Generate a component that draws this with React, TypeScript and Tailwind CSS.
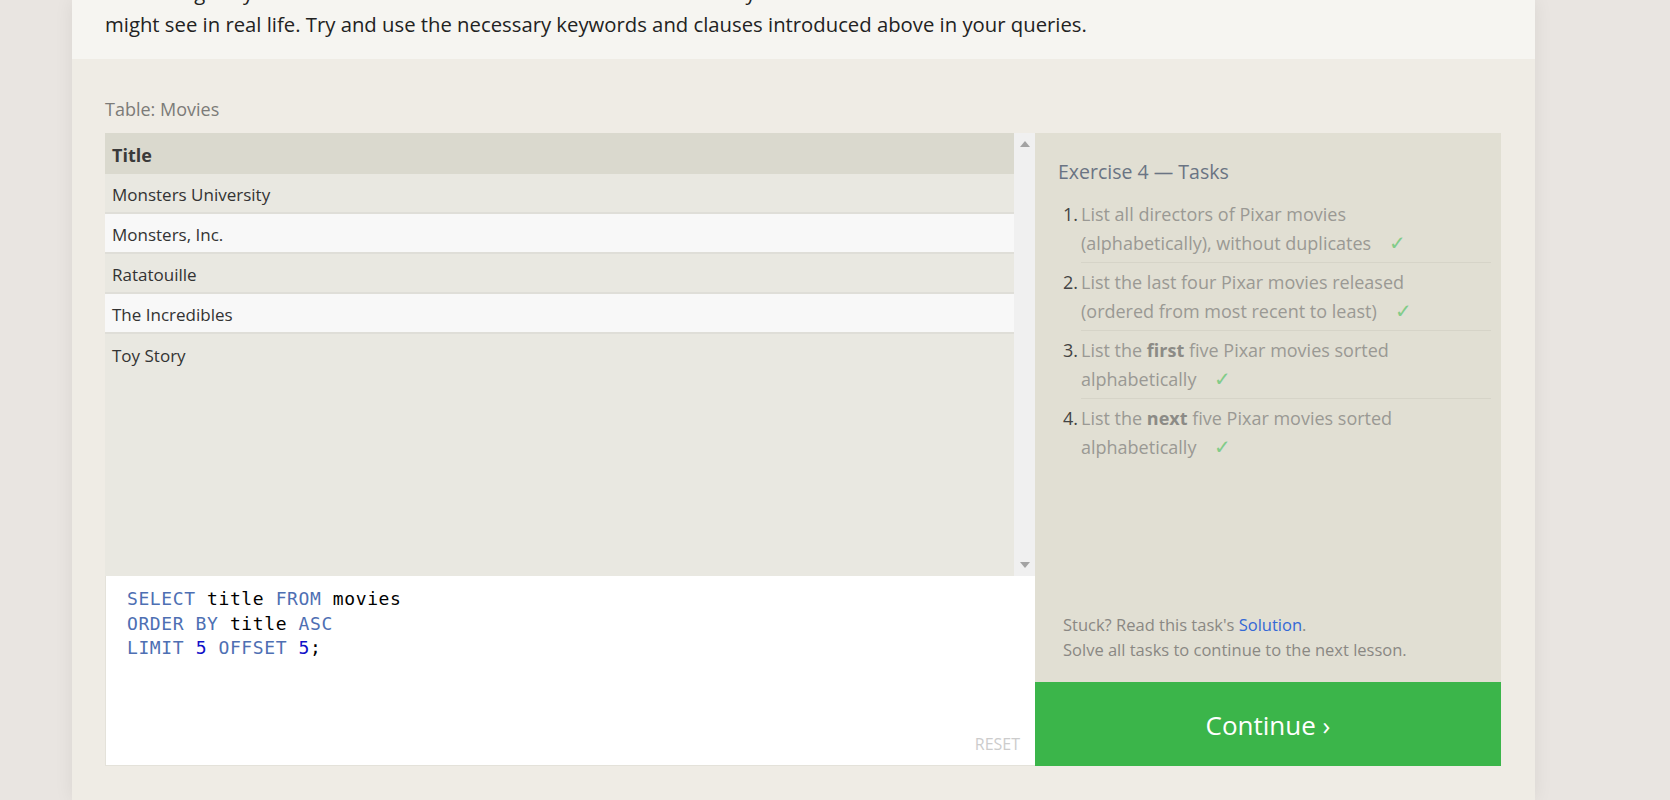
import React from 'react';

const movies = [
  'Monsters University',
  'Monsters, Inc.',
  'Ratatouille',
  'The Incredibles',
  'Toy Story'
];

type Task = { first: React.ReactNode; second: string };

const tasks: Task[] = [
  { first: 'List all directors of Pixar movies', second: '(alphabetically), without duplicates' },
  { first: 'List the last four Pixar movies released', second: '(ordered from most recent to least)' },
  {
    first: (
      <>
        List the <b className="font-bold text-[#8c8b86]">first</b> five Pixar movies sorted
      </>
    ),
    second: 'alphabetically'
  },
  {
    first: (
      <>
        List the <b className="font-bold text-[#8c8b86]">next</b> five Pixar movies sorted
      </>
    ),
    second: 'alphabetically'
  }
];

const Kw = ({ children }: { children: React.ReactNode }) => (
  <span className="text-[#4e6fb3]">{children}</span>
);
const Num = ({ children }: { children: React.ReactNode }) => (
  <span className="text-[#1010c8]">{children}</span>
);

const ResultTable = () => (
  <div className="flex h-[443px] bg-[#e9e8e1]">
    <div className="flex-1">
      <div className="h-[41px] bg-[#dad9ce] px-[7px] pt-[3px] flex items-center text-[18px] font-bold text-[#3a3a3a]">
        Title
      </div>
      {movies.map((m, i) => (
        <div
          key={m}
          className={
            'h-[40px] px-[7px] pt-[3px] flex items-center text-[17px] text-[#333] ' +
            (i < movies.length - 1 ? 'border-b-2 border-[#dfded8] ' : '') +
            (i % 2 === 1 ? 'bg-[#f8f8f8]' : 'bg-[#e9e8e1]')
          }
        >
          {m}
        </div>
      ))}
    </div>
    <div className="w-[21px] bg-[#f0f0f0] flex flex-col justify-between items-center py-[8px]">
      <svg width="10" height="6" viewBox="0 0 10 6">
        <path d="M5 0 L10 6 L0 6 Z" fill="#a3a3a3" />
      </svg>
      <svg width="10" height="6" viewBox="0 0 10 6">
        <path d="M0 0 L10 0 L5 6 Z" fill="#a3a3a3" />
      </svg>
    </div>
  </div>
);

const Editor = () => (
  <div className="relative h-[190px] bg-white border-b border-l border-[#e4e2da] pt-[11px] pl-[21px] font-['DejaVu_Sans_Mono',monospace] text-[18px] leading-[24.5px] text-black tracking-[0.6px]">
    <div>
      <Kw>SELECT</Kw> title <Kw>FROM</Kw> movies
    </div>
    <div>
      <Kw>ORDER BY</Kw> title <Kw>ASC</Kw>
    </div>
    <div>
      <Kw>LIMIT</Kw> <Num>5</Num> <Kw>OFFSET</Kw> <Num>5</Num>;
    </div>
    <span className="absolute right-[15px] bottom-[9px] font-['Open_Sans',sans-serif] tracking-normal text-[16px] text-[#cccccc]">
      RESET
    </span>
  </div>
);

const TaskPanel = () => (
  <div className="w-[466px] flex flex-col">
    <div className="flex-1 bg-[#e1dfd3] flex flex-col pl-[23px] pr-[10px]">
      <h3 className="mt-[26px] text-[19.5px] text-[#6a7483] leading-[26px]">Exercise 4 — Tasks</h3>
      <ol className="mt-[10px] pl-[5px]">
        {tasks.map((t, i) => (
          <li key={i} className="flex">
            <span className="w-[18px] shrink-0 text-[18px] leading-[29px] text-[#444] pt-[5px]">{i + 1}.</span>
            <div
              className={
                'flex-1 pt-[5px] pb-[4px] text-[18px] leading-[29px] text-[#9a9994] ' +
                (i < tasks.length - 1 ? 'border-b border-[#d6d4c8]' : '')
              }
            >
              <div>{t.first}</div>
              <div>
                {t.second}
                <span className="ml-[18px] text-[20px] leading-[20px] text-[#82cc89]">✓</span>
              </div>
            </div>
          </li>
        ))}
      </ol>
      <div className="mt-auto mb-[20px] pl-[5px] text-[16.5px] leading-[25px] text-[#8a8883]">
        <p>
          Stuck? Read this task's <span className="text-[#3468d6]">Solution</span>.
        </p>
        <p>Solve all tasks to continue to the next lesson.</p>
      </div>
    </div>
    <button className="h-[84px] pt-[3px] bg-[#3bb54a] text-white text-[26px] flex items-center justify-center">
      Continue ›
    </button>
  </div>
);

export default function App() {
  return (
    <div className="min-h-screen h-[800px] overflow-hidden bg-[#e9e5e1] font-['Open_Sans',sans-serif]">
      <div className="ml-[72px] w-[1463px] h-full bg-[#efece5] shadow-[0_0_18px_rgba(0,0,0,0.07)]">
        <div className="h-[59px] bg-[#f6f5f1] px-[33px] overflow-hidden">
          <div className="-mt-[24.5px] text-[20.3px] leading-[32px] text-[#222]">
            <p>something for you in the exercise to better mimic what kind of data you</p>
            <p>might see in real life. Try and use the necessary keywords and clauses introduced above in your queries.</p>
          </div>
        </div>
        <div className="pl-[33px] pr-[34px] pt-[38px]">
          <p className="text-[18px] leading-[24px] text-[#7c7b78]">Table: Movies</p>
          <div className="flex mt-[12px]">
            <div className="w-[930px] flex flex-col">
              <ResultTable />
              <Editor />
            </div>
            <TaskPanel />
          </div>
        </div>
      </div>
    </div>
  );
}
